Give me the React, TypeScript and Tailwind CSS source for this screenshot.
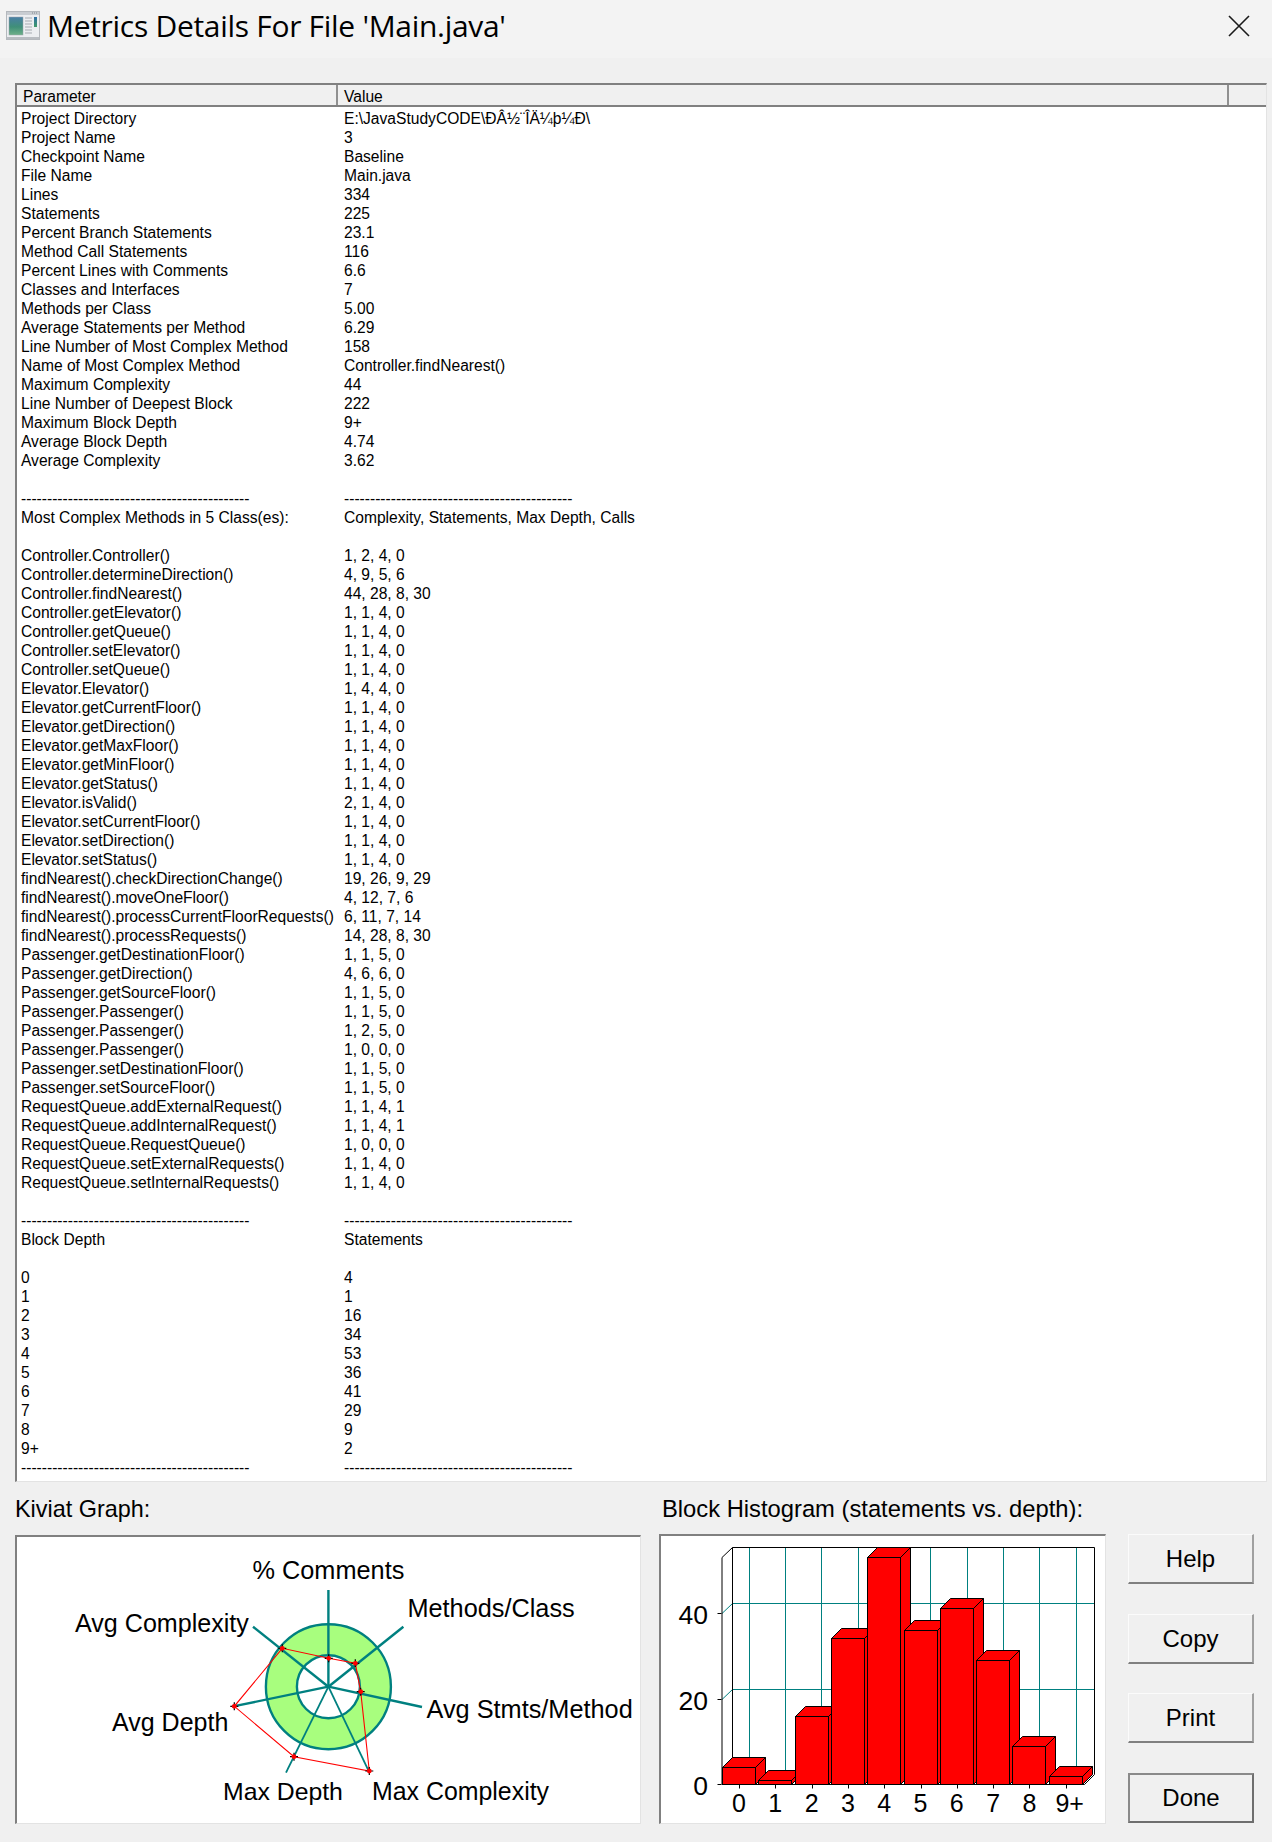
const dash = "--------------------------------------------";
const left: [string, string][] = [
  ["Project Directory", "E:\\JavaStudyCODE\\ÐÂ½¨ÎÄ¼þ¼Ð\\"],
  ["Project Name", "3"],
  ["Checkpoint Name", "Baseline"],
  ["File Name", "Main.java"],
  ["Lines", "334"],
  ["Statements", "225"],
  ["Percent Branch Statements", "23.1"],
  ["Method Call Statements", "116"],
  ["Percent Lines with Comments", "6.6"],
  ["Classes and Interfaces", "7"],
  ["Methods per Class", "5.00"],
  ["Average Statements per Method", "6.29"],
  ["Line Number of Most Complex Method", "158"],
  ["Name of Most Complex Method", "Controller.findNearest()"],
  ["Maximum Complexity", "44"],
  ["Line Number of Deepest Block", "222"],
  ["Maximum Block Depth", "9+"],
  ["Average Block Depth", "4.74"],
  ["Average Complexity", "3.62"],
  ["", ""],
  [dash, dash],
  ["Most Complex Methods in 5 Class(es):", "Complexity, Statements, Max Depth, Calls"],
  ["", ""],
  ["Controller.Controller()", "1, 2, 4, 0"],
  ["Controller.determineDirection()", "4, 9, 5, 6"],
  ["Controller.findNearest()", "44, 28, 8, 30"],
  ["Controller.getElevator()", "1, 1, 4, 0"],
  ["Controller.getQueue()", "1, 1, 4, 0"],
  ["Controller.setElevator()", "1, 1, 4, 0"],
  ["Controller.setQueue()", "1, 1, 4, 0"],
  ["Elevator.Elevator()", "1, 4, 4, 0"],
  ["Elevator.getCurrentFloor()", "1, 1, 4, 0"],
  ["Elevator.getDirection()", "1, 1, 4, 0"],
  ["Elevator.getMaxFloor()", "1, 1, 4, 0"],
  ["Elevator.getMinFloor()", "1, 1, 4, 0"],
  ["Elevator.getStatus()", "1, 1, 4, 0"],
  ["Elevator.isValid()", "2, 1, 4, 0"],
  ["Elevator.setCurrentFloor()", "1, 1, 4, 0"],
  ["Elevator.setDirection()", "1, 1, 4, 0"],
  ["Elevator.setStatus()", "1, 1, 4, 0"],
  ["findNearest().checkDirectionChange()", "19, 26, 9, 29"],
  ["findNearest().moveOneFloor()", "4, 12, 7, 6"],
  ["findNearest().processCurrentFloorRequests()", "6, 11, 7, 14"],
  ["findNearest().processRequests()", "14, 28, 8, 30"],
  ["Passenger.getDestinationFloor()", "1, 1, 5, 0"],
  ["Passenger.getDirection()", "4, 6, 6, 0"],
  ["Passenger.getSourceFloor()", "1, 1, 5, 0"],
  ["Passenger.Passenger()", "1, 1, 5, 0"],
  ["Passenger.Passenger()", "1, 2, 5, 0"],
  ["Passenger.Passenger()", "1, 0, 0, 0"],
  ["Passenger.setDestinationFloor()", "1, 1, 5, 0"],
  ["Passenger.setSourceFloor()", "1, 1, 5, 0"],
  ["RequestQueue.addExternalRequest()", "1, 1, 4, 1"],
  ["RequestQueue.addInternalRequest()", "1, 1, 4, 1"],
  ["RequestQueue.RequestQueue()", "1, 0, 0, 0"],
  ["RequestQueue.setExternalRequests()", "1, 1, 4, 0"],
  ["RequestQueue.setInternalRequests()", "1, 1, 4, 0"],
  ["", ""],
  [dash, dash],
  ["Block Depth", "Statements"],
  ["", ""],
  ["0", "4"],
  ["1", "1"],
  ["2", "16"],
  ["3", "34"],
  ["4", "53"],
  ["5", "36"],
  ["6", "41"],
  ["7", "29"],
  ["8", "9"],
  ["9+", "2"],
  [dash, dash],
];

const FONT = "font-['Liberation_Sans',Arial,sans-serif]";

function TitleIcon() {
  return (
    <svg width="34" height="29" viewBox="0 0 34 29" className="shrink-0">
      <defs>
        <linearGradient id="pane" x1="0" y1="0" x2="0" y2="1">
          <stop offset="0" stopColor="#4a7fa6" />
          <stop offset="0.55" stopColor="#3f8f78" />
          <stop offset="1" stopColor="#6fb089" />
        </linearGradient>
        <linearGradient id="bar" x1="0" y1="0" x2="0" y2="1">
          <stop offset="0" stopColor="#2e6fa8" />
          <stop offset="1" stopColor="#3f9a68" />
        </linearGradient>
      </defs>
      <rect x="0.5" y="0.5" width="33" height="28" fill="#eceef1" stroke="#b4b8bd" />
      <rect x="1" y="1" width="32" height="3" fill="#c9cdd2" />
      <rect x="1" y="26" width="32" height="2" fill="#b9bdc2" />
      <rect x="3" y="6" width="14" height="18" fill="url(#pane)" stroke="#9aa5ad" strokeWidth="0.5" />
      <path d="M19 7h7M19 10h7M19 13h7M19 16h7M19 19h7M19 22h7" stroke="#a6abb1" strokeWidth="1" />
      <rect x="28" y="6" width="3" height="10" fill="url(#bar)" />
      <path d="M26 2h5" stroke="#7d858c" strokeDasharray="1 1" />
    </svg>
  );
}

function Kiviat() {
  const c = [328.4, 1686.7];
  const spokes = [
    [328.4, 1590],
    [403.4, 1626.7],
    [422, 1707],
    [369, 1771.7],
    [286, 1772.7],
    [232, 1706.7],
    [253, 1626.7],
  ];
  const pts = [
    [328.7, 1658.3],
    [355.3, 1663.3],
    [360.7, 1691.7],
    [369.3, 1771],
    [294, 1756.7],
    [234.3, 1706.3],
    [282.3, 1648.3],
  ];
  const labels: [string, number, number, number][] = [
    ["% Comments", 252.5, 1579, 25.3],
    ["Methods/Class", 407.4, 1617, 25.3],
    ["Avg Complexity", 75, 1631.5, 25.1],
    ["Avg Stmts/Method", 426.5, 1717.5, 25.3],
    ["Avg Depth", 112, 1731, 25],
    ["Max Depth", 223, 1799.5, 24.8],
    ["Max Complexity", 372, 1799.5, 24.9],
  ];
  return (
    <svg viewBox="17 1537 623 286" className="block w-full h-full">
      <circle cx={c[0]} cy={c[1]} r="62.5" fill="#a8fe7e" stroke="#008080" strokeWidth="2.4" />
      <circle cx={c[0]} cy={c[1]} r="31.5" fill="#ffffff" stroke="#008080" strokeWidth="2.4" />
      {spokes.map((s, i) => (
        <line key={i} x1={c[0]} y1={c[1]} x2={s[0]} y2={s[1]} stroke="#008080" strokeWidth={i === 3 || i === 4 ? 1.8 : 2.4} />
      ))}
      <polygon points={pts.map((p) => p.join(",")).join(" ")} fill="none" stroke="#ff0000" strokeWidth="1.1" />
      {pts.map((p, i) => (
        <g key={i}>
          <path d={`M${p[0] - 4} ${p[1]}h8M${p[0]} ${p[1] - 4}v8`} stroke="#000" strokeWidth="1.2" />
          <circle cx={p[0]} cy={p[1]} r="2.4" fill="#ff0000" />
        </g>
      ))}
      {labels.map(([t, x, y, s]) => (
        <text key={t} x={x} y={y} fontSize={s} fill="#000" fontFamily="'Liberation Sans',Arial,sans-serif">
          {t}
        </text>
      ))}
    </svg>
  );
}

function Histogram() {
  const vals = [4, 1, 16, 34, 53, 36, 41, 29, 9, 2];
  const names = ["0", "1", "2", "3", "4", "5", "6", "7", "8", "9+"];
  const y0 = 1784.5;
  const u = 4.3;
  const top = 1547.5;
  const d = 10;
  const grid = [749.5, 785.5, 821.5, 858.5, 894.5, 930.5, 967.5, 1003.5, 1039.5, 1076.5];
  return (
    <svg viewBox="661 1536 444 287" className="block w-full h-full">
      <defs>
        <clipPath id="plot">
          <rect x="700" y={top - 0.5} width="400" height="260" />
        </clipPath>
      </defs>
      {grid.map((x) => (
        <line key={x} x1={x} y1={top} x2={x} y2="1774.5" stroke="#008080" strokeWidth="1" />
      ))}
      {[1603.5, 1689.5].map((y) => (
        <path key={y} d={`M722 ${y + 10}L732.5 ${y}H1094.5`} fill="none" stroke="#008080" strokeWidth="1" />
      ))}
      <path d={`M722 ${y0}V1557.5L732.5 ${top}H1094.5V1774.5L1084.5 ${y0}H722`} fill="none" stroke="#000" strokeWidth="1" />
      <line x1="732.5" y1={top} x2="732.5" y2="1774.5" stroke="#000" strokeWidth="1" />
      <g clipPath="url(#plot)">
        {vals.map((v, i) => {
          const x = Math.round(722 + 36.3 * i) + 0.5;
          const w = 33;
          const y = Math.round(y0 - v * u) + 0.5;
          return (
            <g key={i} stroke="#000" strokeWidth="1" fill="#ff0000">
              <polygon points={`${x},${y} ${x + d},${y - d} ${x + w + d},${y - d} ${x + w},${y}`} />
              <polygon points={`${x + w},${y} ${x + w + d},${y - d} ${x + w + d},${y0 - d} ${x + w},${y0}`} />
              <rect x={x} y={y} width={w} height={y0 - y} />
            </g>
          );
        })}
      </g>
      <path d={`M717.5 1613.5h4M717.5 1699.5h4M717.5 ${y0}h4`} stroke="#000" strokeWidth="1" />
      {names.map((_, i) => {
        const x = Math.round(739 + 36.3 * i) + 0.5;
        return <line key={i} x1={x} y1={y0} x2={x} y2={y0 + 4} stroke="#000" strokeWidth="1" />;
      })}
      {[["40", 1624], ["20", 1710], ["0", 1795]].map(([t, y]) => (
        <text key={t} x="708" y={y} textAnchor="end" fontSize="26.5" fill="#000" fontFamily="'Liberation Sans',Arial,sans-serif">
          {t}
        </text>
      ))}
      {names.map((t, i) => (
        <text key={t} x={739 + 36.3 * i + (i === 9 ? 4 : 0)} y="1812" textAnchor="middle" fontSize="25" fill="#000" fontFamily="'Liberation Sans',Arial,sans-serif">
          {t}
        </text>
      ))}
    </svg>
  );
}

function Btn({ label, def }: { label: string; def?: boolean }) {
  return (
    <button
      className={
        "w-[126px] h-[50px] bg-[#f0f0f0] text-[24px] pt-[1px] text-black " +
        (def
          ? "border-2 border-t-[#8a8a8a] border-l-[#8a8a8a] border-r-[#6e6e6e] border-b-[#6e6e6e]"
          : "border-t border-l border-r-2 border-b-2 border-t-[#fbfbfb] border-l-[#fbfbfb] border-r-[#a0a0a0] border-b-[#808080]")
      }
    >
      {label}
    </button>
  );
}

export default function App() {
  return (
    <div className={`w-[1272px] h-[1842px] bg-[#f0f0f0] flex flex-col text-black overflow-hidden ${FONT}`}>
      <div className="h-[58px] bg-[#f3f3f3] flex items-center pl-[6px] pr-[22px] shrink-0 pb-[7px]">
        <TitleIcon />
        <div className="ml-[7px] text-[30px] leading-none font-['Open_Sans',sans-serif] tracking-[-0.3px]">Metrics Details For File 'Main.java'</div>
        <svg width="22" height="22" viewBox="0 0 22 22" className="ml-auto">
          <path d="M1 1L21 21M21 1L1 21" stroke="#1a1a1a" strokeWidth="1.6" fill="none" />
        </svg>
      </div>

      <div className="ml-[15px] mt-[25px] w-[1252px] h-[1399px] bg-white border-t-2 border-l-2 border-t-[#808080] border-l-[#808080] border-r border-b border-r-[#e3e3e3] border-b-[#e3e3e3] overflow-hidden shrink-0">
        <div className="h-[22px] flex bg-[#f0f0f0] border-b-2 border-b-[#808080] text-[15.6px] leading-[23px]">
          <div className="w-[321px] pl-[6px] border-r-2 border-r-[#909090]">Parameter</div>
          <div className="w-[891px] pl-[6px] border-r-2 border-r-[#909090]">Value</div>
        </div>
        <div className="grid grid-cols-[323px_1fr] text-[15.6px] leading-[19px] auto-rows-[19px] pl-[4px] pt-[2px]">
          {left.map(([a, b], i) => (
            <div key={i} className="contents">
              <div className="whitespace-nowrap h-[19px]">{a}</div>
              <div className="whitespace-nowrap h-[19px]">{b}</div>
            </div>
          ))}
        </div>
      </div>

      <div className="flex mt-[14px] ml-[15px]">
        <div className="w-[626px] shrink-0">
          <div className="text-[23.4px] leading-[26px] h-[26px]">Kiviat Graph:</div>
          <div className="mt-[13px] w-[626px] h-[289px] bg-white border-t-2 border-l-2 border-t-[#808080] border-l-[#808080] border-r border-b border-r-[#e3e3e3] border-b-[#e3e3e3]">
            <Kiviat />
          </div>
        </div>
        <div className="w-[447px] ml-[18px] shrink-0">
          <div className="text-[23.75px] leading-[26px] h-[26px] ml-[3px] whitespace-nowrap">Block Histogram (statements vs. depth):</div>
          <div className="mt-[12px] w-[447px] h-[290px] bg-white border-t-2 border-l-2 border-t-[#808080] border-l-[#808080] border-r border-b border-r-[#e3e3e3] border-b-[#e3e3e3]">
            <Histogram />
          </div>
        </div>
        <div className="ml-[22px] mt-[38px] flex flex-col gap-[29.5px] shrink-0">
          <Btn label="Help" />
          <Btn label="Copy" />
          <Btn label="Print" />
          <Btn label="Done" def />
        </div>
      </div>
    </div>
  );
}
